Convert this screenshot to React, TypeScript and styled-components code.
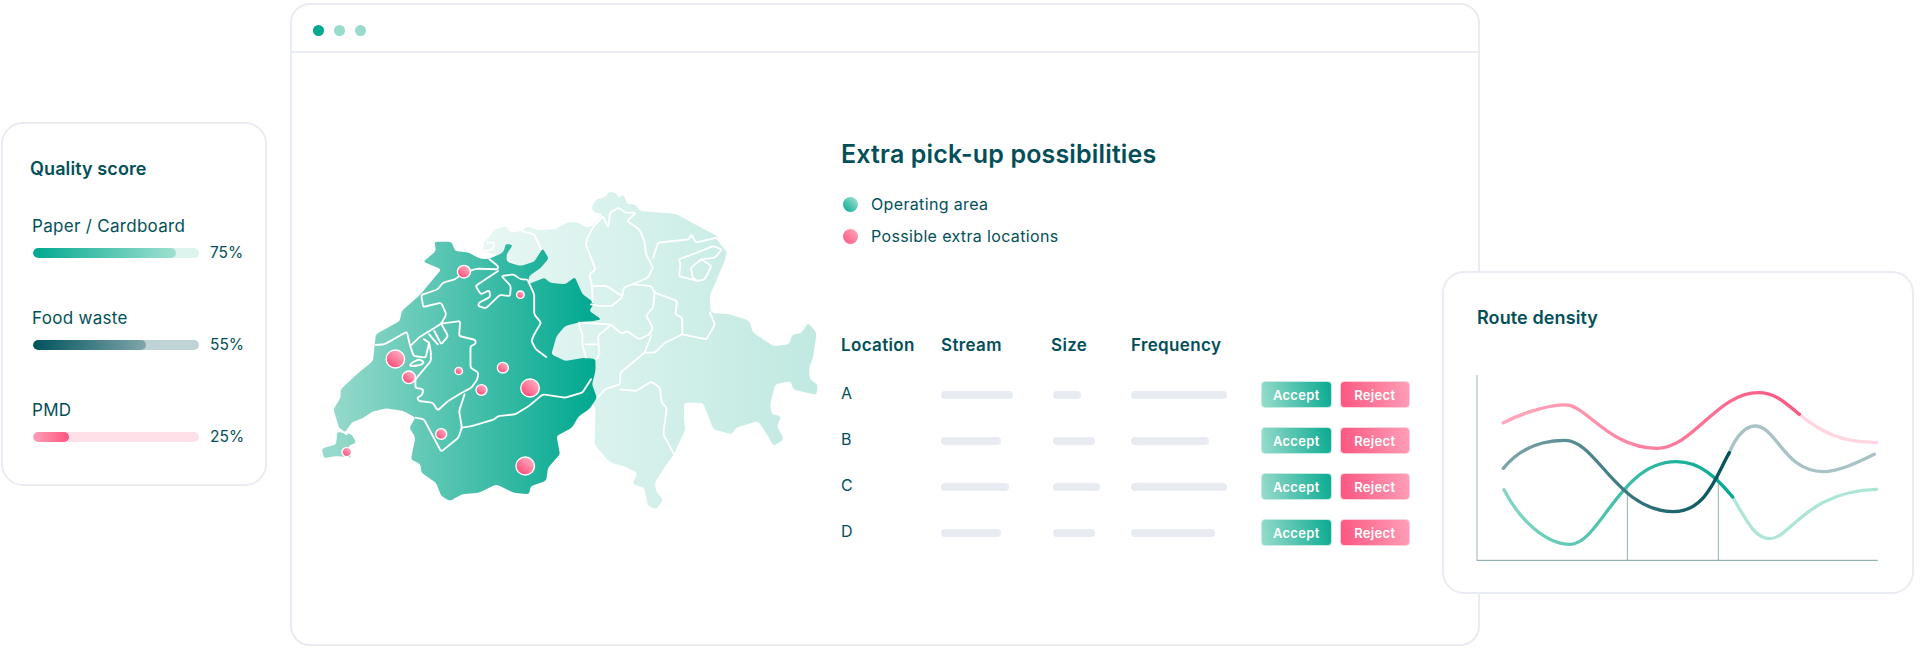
import styled, { createGlobalStyle } from "styled-components";

const GlobalStyle = createGlobalStyle`
  html, body {
    margin: 0;
    padding: 0;
    background: #ffffff;
    overflow: hidden;
  }
  body {
    font-family: Inter, "Open Sans", "Liberation Sans", sans-serif;
    color: #024f59;
  }
`;

const Stage = styled.div`
  display: flex;
  align-items: flex-start;
  width: 1920px;
  height: 649px;
  padding: 3px 0 0 1px;
  box-sizing: border-box;
`;

const Card = styled.section<{ $width: number; $height: number; $top: number }>`
  width: ${({ $width }) => $width}px;
  height: ${({ $height }) => $height}px;
  margin-top: ${({ $top }) => $top}px;
  flex: none;
  box-sizing: border-box;
  background: #ffffff;
  border: 2px solid #e9ecf3;
  border-radius: 22px;
  position: relative;
  z-index: 1;
`;

const QualityCard = styled(Card)`
  padding: 34px 0 0 27px;
`;

const DensityCard = styled(Card)`
  margin-left: -38px;
  padding: 34px 0 0 33px;
`;

const CardTitle = styled.h3`
  margin: 0;
  font-size: 18px;
  line-height: 22px;
  font-weight: 600;
  letter-spacing: 0.1px;
`;

const ScoreList = styled.div`
  display: flex;
  flex-direction: column;
  gap: 44px;
  margin: 35px 0 0 3px;
`;

const ScoreBlock = styled.div`
  display: flex;
  flex-direction: column;
  gap: 6px;
`;

const ScoreLabel = styled.div`
  margin-left: -1px;
  font-size: 17px;
  line-height: 22px;
  letter-spacing: 0.3px;
`;

const ScoreRow = styled.div`
  display: flex;
  align-items: center;
  gap: 11px;
`;

const Track = styled.div<{ $bg: string }>`
  width: 166px;
  height: 10px;
  border-radius: 5px;
  background: ${({ $bg }) => $bg};
  overflow: hidden;
`;

const Fill = styled.div<{ $from: string; $to: string }>`
  height: 100%;
  border-radius: 5px;
  background: linear-gradient(90deg, ${({ $from }) => $from}, ${({ $to }) => $to});
`;

const ScoreValue = styled.span`
  font-size: 15.5px;
  line-height: 20px;
`;

const Window = styled.main`
  width: 1190px;
  height: 643px;
  margin-left: 23px;
  flex: none;
  box-sizing: border-box;
  border: 2px solid #e9ecf3;
  border-radius: 20px;
  display: flex;
  flex-direction: column;
`;

const WindowBar = styled.header`
  height: 48px;
  flex: none;
  box-sizing: border-box;
  border-bottom: 2px solid #e9ecf3;
  display: flex;
  align-items: center;
  gap: 10px;
  padding: 4px 0 0 21px;
`;

const WindowDot = styled.span<{ $on?: boolean }>`
  width: 11px;
  height: 11px;
  border-radius: 50%;
  background: ${({ $on }) => ($on ? "#00a88f" : "#97dccb")};
`;

const WindowBody = styled.div`
  display: flex;
  flex: 1;
  padding: 0 0 0 8px;
`;

const MapSvg = styled.svg`
  width: 540px;
  height: 350px;
  margin-top: 118px;
  flex: none;
`;

const Details = styled.div`
  margin-left: 1px;
  padding-top: 84px;
  display: flex;
  flex-direction: column;
`;

const Heading = styled.h2`
  margin: 0;
  font-size: 25px;
  line-height: 34px;
  font-weight: 600;
  letter-spacing: 0.15px;
`;

const Legend = styled.ul`
  list-style: none;
  margin: 22px 0 0;
  padding: 0;
  display: flex;
  flex-direction: column;
  gap: 10px;
`;

const LegendItem = styled.li`
  display: flex;
  align-items: center;
  gap: 13px;
  padding-left: 2px;
  font-size: 16px;
  line-height: 22px;
  letter-spacing: 0.35px;
`;

const LegendDot = styled.span<{ $from: string; $to: string }>`
  width: 15px;
  height: 15px;
  border-radius: 50%;
  background: linear-gradient(45deg, ${({ $from }) => $from}, ${({ $to }) => $to});
`;

const Grid = styled.div`
  display: grid;
  grid-template-columns: 100px 110px 80px 130px 149px;
  align-items: center;
`;

const HeaderRow = styled(Grid)`
  margin-top: 87px;
  margin-bottom: 25px;
  font-size: 17px;
  line-height: 22px;
  font-weight: 600;
  letter-spacing: 0.35px;
`;

const RowList = styled.div`
  display: flex;
  flex-direction: column;
  gap: 19px;
`;

const RowLabel = styled.span`
  font-size: 16px;
  line-height: 22px;
  padding-bottom: 4px;
`;

const Placeholder = styled.span<{ $w: number; $indent?: number }>`
  display: block;
  width: ${({ $w }) => $w}px;
  height: 8px;
  margin-left: ${({ $indent }) => $indent ?? 0}px;
  border-radius: 4px;
  background: #e8ebf2;
`;

const Actions = styled.div`
  display: flex;
  gap: 8px;
`;

const ActionButton = styled.button<{ $kind: "accept" | "reject" }>`
  width: 71px;
  height: 27px;
  padding: 0;
  border: 1px solid ${({ $kind }) => ($kind === "accept" ? "#c5ebe2" : "#ffd0dc")};
  border-radius: 4px;
  color: #ffffff;
  font-family: inherit;
  font-size: 13px;
  font-weight: 600;
  letter-spacing: 0.3px;
  background: ${({ $kind }) =>
    $kind === "accept"
      ? "linear-gradient(80deg, #98dccb, #0aaa92)"
      : "linear-gradient(80deg, #fb5580, #ff9fb8)"};
`;

const ChartSvg = styled.svg`
  display: block;
  width: 410px;
  height: 195px;
  margin: 42px 0 0 -7px;
`;

const scores = [
  { label: "Paper / Cardboard", value: 75, fillW: 143, track: "#dcf3ee", from: "#00a88f", to: "#a1e0d1" },
  { label: "Food waste", value: 55, fillW: 113, track: "#bfd3d6", from: "#00525d", to: "#7fa5aa" },
  { label: "PMD", value: 25, fillW: 36, track: "#ffe0e8", from: "#ff9fb8", to: "#fb5580" },
];

const rows = [
  { name: "A", stream: 72, size: 28, freq: 96 },
  { name: "B", stream: 60, size: 42, freq: 78 },
  { name: "C", stream: 68, size: 47, freq: 96 },
  { name: "D", stream: 60, size: 42, freq: 84 },
];

const lightArea =
  "M530,240 L535,212 555,192 560,178 600,165 610,185 645,180 660,165 690,178 740,175 780,152 810,155 830,170 850,165 880,128 860,128 845,112 860,85 890,78 895,62 918,65 925,82 940,70 950,100 975,100 985,120 1040,125 1090,128 1130,150 1210,195 1240,235 1235,265 1200,350 1190,372 1192,425 1250,430 1305,450 1315,485 1375,525 1420,520 1430,490 1455,488 1475,455 1500,485 1490,560 1478,590 1480,625 1503,640 1500,672 1432,655 1425,630 1380,640 1365,700 1370,730 1398,735 1385,765 1405,805 1375,825 1350,780 1330,750 1265,770 1255,790 1200,775 1180,720 1170,695 1115,695 1115,750 1120,775 1085,850 1055,895 1030,935 1035,965 1055,985 1035,1015 1010,1005 1000,950 965,940 980,905 940,885 900,875 855,820 858,710 740,560 720,470 640,290 600,260 Z";

const darkArea =
  "M390,212 L440,212 450,240 490,245 520,262 545,265 590,245 598,218 618,222 600,250 600,272 640,285 680,272 705,232 722,262 700,290 665,315 662,340 710,320 725,335 770,340 798,318 820,370 855,395 840,420 875,445 855,450 820,452 770,465 745,495 730,550 770,570 830,560 858,565 858,600 848,640 862,680 840,715 810,735 790,770 745,795 755,850 720,890 715,930 670,945 665,970 620,965 570,940 520,965 470,970 435,990 410,975 395,935 352,905 350,880 322,865 335,800 318,770 335,740 300,720 250,712 210,722 185,740 150,755 130,785 115,775 97,715 118,680 118,655 170,605 212,570 220,490 290,450 295,420 350,370 410,295 358,272 395,240 Z M108,782 L150,790 163,815 140,825 150,860 105,855 70,862 63,833 105,820 Z";

const borders = [
  "M220,522 L245,520 310,482 320,525 345,500 410,458 425,430 410,395 358,408 352,372 400,355 415,335 450,325 475,305 515,293 575,295 575,285 550,265",
  "M575,300 L510,345 525,370 550,358 552,378 520,395 517,405 540,412 580,372 610,375 612,345 585,315 620,310 640,325 660,325 680,370 680,430 700,455 680,490 672,510 685,535 715,558",
  "M410,458 L465,450 462,495 510,507 510,520 495,525 495,590 518,605 515,625 498,650 470,665 430,690 400,718 385,695 345,690 340,680 355,672 358,655 335,650 335,625 380,570 380,545 375,515 360,505",
  "M320,525 L330,555 365,560 375,515 M375,490 L400,520 M390,480 L410,520 430,495 410,458",
  "M318,585 L325,575 345,565 360,572 355,580 335,585 Z",
  "M478,670 L462,720 470,770 460,800 410,842 360,745 335,740",
  "M470,770 L500,765 565,745 575,735 625,730 665,705 705,670 770,680 820,665 845,625",
  "M115,775 L135,790",
  "M835,200 L850,170 880,135 895,170 900,125 925,110 945,125 975,125 950,150 985,175 1000,210 1005,250 1025,290 1010,320 965,340 940,350 935,380 905,405 870,405 845,400",
  "M850,345 L890,345 935,375 M835,200 L830,220 845,260 858,295 840,310 848,345 850,395",
  "M965,340 L1020,345 1030,365 1025,410 1005,435 1025,470 1015,490 985,505 950,480 935,488 900,460 810,455",
  "M1030,365 L1095,390 1090,430 1110,440 1110,490 1060,515 1030,545 1000,545 1020,495",
  "M1110,490 L1180,505 1205,460 1190,425",
  "M1025,260 L1040,215 1085,210 1130,205 1135,190 1150,215 1210,200 1240,240",
  "M1100,265 L1165,240 1200,225 1225,235 1205,260 1165,265 1135,290 1140,320 1155,330 1100,315 1105,280 Z",
  "M1165,265 L1195,285 1175,325 1155,330",
  "M1000,545 L960,580 930,605 930,640 885,655 865,680",
  "M930,655 L975,660 1020,632 1045,650 1050,695 1065,710 1055,790 1085,848",
  "M810,460 L820,490 820,520 830,560 M905,460 L865,495 870,550 860,565 M830,520 L865,520",
  "M545,215 L565,215 560,235 535,240 M645,180 L680,190 700,235",
];

const pins = [
  { x: 277, y: 564, r: 27 },
  { x: 316, y: 619, r: 19 },
  { x: 476, y: 302, r: 19 },
  { x: 640, y: 371, r: 11 },
  { x: 461, y: 600, r: 11 },
  { x: 589, y: 590, r: 16 },
  { x: 527, y: 657, r: 16 },
  { x: 668, y: 651, r: 27 },
  { x: 410, y: 789, r: 16 },
  { x: 136, y: 843, r: 14 },
  { x: 654, y: 885, r: 27 },
];

// softens the corners of the traced outlines
function rounded(d: string, r: number) {
  return d
    .split(/(?=M)/)
    .map((part) => {
      const pts = [...part.matchAll(/(\d+),(\d+)/g)].map((m) => [Number(m[1]), Number(m[2])]);
      const closed = part.includes("Z");
      const n = pts.length;
      const cut = (a: number[], b: number[]) => {
        const len = Math.hypot(b[0] - a[0], b[1] - a[1]);
        const t = Math.min(r, len / 2) / len;
        return `${(a[0] + (b[0] - a[0]) * t).toFixed(1)},${(a[1] + (b[1] - a[1]) * t).toFixed(1)}`;
      };
      let out = closed ? `M${cut(pts[0], pts[1])}` : `M${pts[0][0]},${pts[0][1]}`;
      const to = closed ? n : n - 2;
      for (let i = 1; i <= to; i++) {
        const p = pts[i % n];
        const prev = pts[(i - 1 + n) % n];
        const next = pts[(i + 1) % n];
        out += ` L${cut(p, prev)} Q${p[0]},${p[1]} ${cut(p, next)}`;
      }
      return closed ? `${out} Z` : `${out} L${pts[n - 1][0]},${pts[n - 1][1]}`;
    })
    .join(" ");
}

function SwissMap() {
  return (
    <MapSvg viewBox="0 0 1568 1050" preserveAspectRatio="none">
      <defs>
        <linearGradient id="mapLight" gradientUnits="userSpaceOnUse" x1="530" y1="0" x2="1500" y2="0">
          <stop offset="0" stopColor="#e8f7f4" />
          <stop offset="1" stopColor="#c0e9e1" />
        </linearGradient>
        <linearGradient id="mapDark" gradientUnits="userSpaceOnUse" x1="90" y1="0" x2="860" y2="0">
          <stop offset="0" stopColor="#97dacb" />
          <stop offset="1" stopColor="#00a88f" />
        </linearGradient>
        <linearGradient id="pin" x1="0.9" y1="0.1" x2="0.2" y2="0.9">
          <stop offset="0" stopColor="#ffb3c6" />
          <stop offset="1" stopColor="#fb4f7b" />
        </linearGradient>
      </defs>
      <path d={rounded(lightArea, 10)} fill="url(#mapLight)" />
      <path d={rounded(darkArea, 8)} fill="url(#mapDark)" />
      {borders.map((d) => (
        <path key={d} d={rounded(d, 6)} fill="none" stroke="#ffffff" strokeWidth="5.5" strokeLinejoin="round" strokeLinecap="round" />
      ))}
      {pins.map((p) => (
        <circle key={`${p.x}-${p.y}`} cx={p.x} cy={p.y} r={p.r} fill="url(#pin)" stroke="#ffffff" strokeWidth="4" />
      ))}
    </MapSvg>
  );
}

function DensityChart() {
  return (
    <ChartSvg viewBox="120 330 1230 585">
      <defs>
        <linearGradient id="linePink" gradientUnits="userSpaceOnUse" x1="220" y1="0" x2="1108" y2="0">
          <stop offset="0" stopColor="#ffa9bd" />
          <stop offset="1" stopColor="#fb5580" />
        </linearGradient>
        <linearGradient id="lineDark" gradientUnits="userSpaceOnUse" x1="220" y1="0" x2="898" y2="0">
          <stop offset="0" stopColor="#7fa5aa" />
          <stop offset="1" stopColor="#00525d" />
        </linearGradient>
        <linearGradient id="lineGreen" gradientUnits="userSpaceOnUse" x1="220" y1="0" x2="908" y2="0">
          <stop offset="0" stopColor="#86d6c4" />
          <stop offset="1" stopColor="#00a88f" />
        </linearGradient>
      </defs>
      <path d="M141,342 V898" stroke="#b5c9cc" strokeWidth="4" fill="none" />
      <path d="M140,898 H1343" stroke="#7fa0a4" strokeWidth="3" fill="none" />
      <path d="M592,685 V898 M865,650 V898" stroke="#7fa0a4" strokeWidth="2.5" fill="none" />
      <g fill="none" strokeWidth="10" strokeLinecap="round">
        <path d="M908,708 C950,780 975,833 1020,833 C1080,833 1130,690 1340,685" stroke="#afe5d9" />
        <path d="M898,575 C920,520 950,495 975,495 C1040,495 1060,630 1180,632 C1230,632 1290,600 1333,580" stroke="#a8c2c6" />
        <path d="M1108,460 C1170,510 1230,545 1340,544" stroke="#ffd6e0" />
        <path d="M220,485 C290,450 370,430 410,432 C470,435 540,562 680,562 C790,562 860,395 985,395 C1040,395 1070,430 1108,460" stroke="url(#linePink)" />
        <path d="M222,686 C270,780 350,850 420,850 C510,850 570,600 740,602 C810,602 860,650 908,708" stroke="url(#lineGreen)" />
        <path d="M220,622 C270,560 340,538 405,538 C500,538 560,750 730,752 C830,752 860,640 898,575" stroke="url(#lineDark)" />
      </g>
    </ChartSvg>
  );
}

export default function App() {
  return (
    <>
      <GlobalStyle />
      <Stage>
        <QualityCard $width={266} $height={364} $top={119}>
          <CardTitle>Quality score</CardTitle>
          <ScoreList>
            {scores.map((s) => (
              <ScoreBlock key={s.label}>
                <ScoreLabel>{s.label}</ScoreLabel>
                <ScoreRow>
                  <Track $bg={s.track}>
                    <Fill $from={s.from} $to={s.to} style={{ width: s.fillW }} />
                  </Track>
                  <ScoreValue>{s.value}%</ScoreValue>
                </ScoreRow>
              </ScoreBlock>
            ))}
          </ScoreList>
        </QualityCard>
        <Window>
          <WindowBar>
            <WindowDot $on />
            <WindowDot />
            <WindowDot />
          </WindowBar>
          <WindowBody>
            <SwissMap />
            <Details>
              <Heading>Extra pick-up possibilities</Heading>
              <Legend>
                <LegendItem>
                  <LegendDot $from="#00a88f" $to="#aee5d8" />
                  Operating area
                </LegendItem>
                <LegendItem>
                  <LegendDot $from="#fb5580" $to="#ffa9bd" />
                  Possible extra locations
                </LegendItem>
              </Legend>
              <HeaderRow>
                <span>Location</span>
                <span>Stream</span>
                <span>Size</span>
                <span>Frequency</span>
              </HeaderRow>
              <RowList>
                {rows.map((r) => (
                  <Grid key={r.name}>
                    <RowLabel>{r.name}</RowLabel>
                    <Placeholder $w={r.stream} />
                    <Placeholder $w={r.size} $indent={2} />
                    <Placeholder $w={r.freq} />
                    <Actions>
                      <ActionButton $kind="accept">Accept</ActionButton>
                      <ActionButton $kind="reject">Reject</ActionButton>
                    </Actions>
                  </Grid>
                ))}
              </RowList>
            </Details>
          </WindowBody>
        </Window>
        <DensityCard $width={472} $height={323} $top={268}>
          <CardTitle>Route density</CardTitle>
          <DensityChart />
        </DensityCard>
      </Stage>
    </>
  );
}
